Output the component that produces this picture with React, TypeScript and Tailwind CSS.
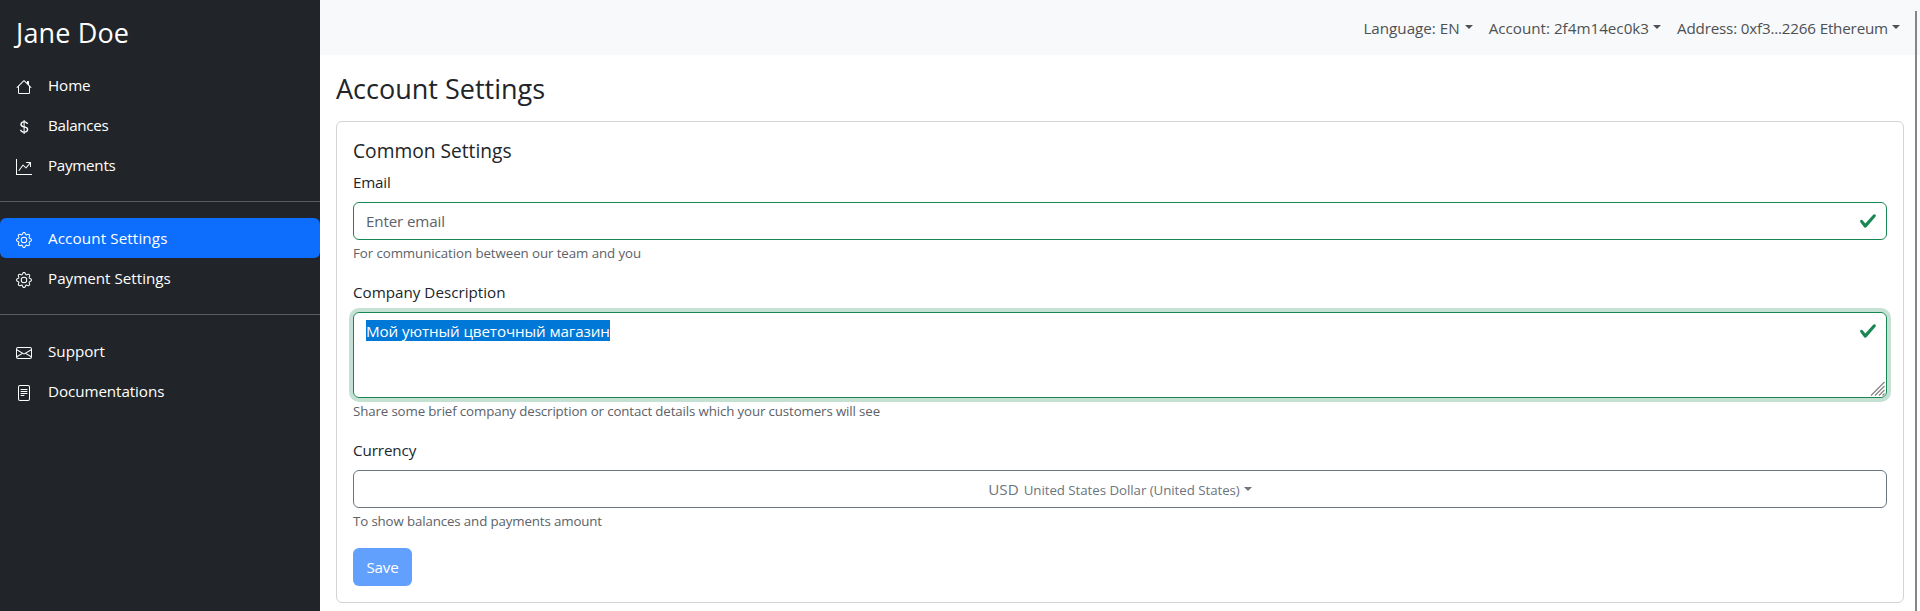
import type { ReactNode } from "react";
import type { IconType } from "react-icons";
import {
  BsHouse,
  BsCurrencyDollar,
  BsGraphUpArrow,
  BsGear,
  BsEnvelope,
  BsFileText,
} from "react-icons/bs";

function Caret({ className = "" }: { className?: string }) {
  return (
    <span
      className={`inline-block border-x-[4.8px] border-t-[4.8px] border-x-transparent border-t-current ${className}`}
    />
  );
}

function NavItem({
  icon: Icon,
  label,
  tracking = "",
  active = false,
}: {
  icon: IconType;
  label: string;
  tracking?: string;
  active?: boolean;
}) {
  return (
    <a
      className={`flex h-10 items-center gap-4 rounded-md px-4 text-white ${active ? "bg-[#0d6efd]" : ""}`}
    >
      <Icon className="mt-1 size-4 shrink-0" />
      <span className={`-mt-px ${tracking}`}>{label}</span>
    </a>
  );
}

function Divider() {
  return <hr className="my-4 border-t border-[#595c5f]" />;
}

function Check() {
  return (
    <svg viewBox="0 0 8 8" className="size-[18px] shrink-0" fill="#198754">
      <path d="M2.3 6.73.6 4.53c-.4-1.04.46-1.4 1.1-.8l1.1 1.4 3.4-3.8c.6-.63 1.6-.27 1.2.7l-4 4.6c-.43.5-.8.4-1.1.1z" />
    </svg>
  );
}

function Label({ children, className = "" }: { children: ReactNode; className?: string }) {
  return <label className={`mb-2 block text-[#212529] ${className}`}>{children}</label>;
}

function Help({ children, className = "" }: { children: ReactNode; className?: string }) {
  return (
    <p className={`mt-1 h-5 text-[13.3px] leading-[18px] text-[#5c6268] ${className}`}>{children}</p>
  );
}

export default function App() {
  return (
    <div className="relative flex h-[611px] overflow-hidden bg-white font-['Open_Sans','Noto_Sans',sans-serif] text-[15.2px] leading-6">
      <aside className="w-80 shrink-0 bg-[#212529] pt-4">
        <div className="mb-[7px] h-[42px] px-4 text-[27px] leading-[34px] tracking-[0.15px] text-white">Jane Doe</div>
        <nav>
          <NavItem icon={BsHouse} label="Home" tracking="tracking-[-0.1px]" />
          <NavItem icon={BsCurrencyDollar} label="Balances" tracking="tracking-[-0.3px]" />
          <NavItem icon={BsGraphUpArrow} label="Payments" tracking="tracking-[-0.28px]" />
          <Divider />
          <NavItem icon={BsGear} label="Account Settings" tracking="tracking-[0.12px]" active />
          <NavItem icon={BsGear} label="Payment Settings" />
          <Divider />
          <NavItem icon={BsEnvelope} label="Support" />
          <NavItem icon={BsFileText} label="Documentations" tracking="tracking-[-0.08px]" />
        </nav>
      </aside>

      <main className="flex-1">
        <header className="flex h-[55px] items-center justify-end gap-4 bg-[#f8f9fa] pr-5 text-[#4d5154]">
          <div className="flex items-center gap-[5px]">
            <span>Language: EN</span>
            <Caret className="-mt-0.5" />
          </div>
          <div className="flex items-center gap-1">
            <span>Account: 2f4m14ec0k3</span>
            <Caret className="-mt-0.5" />
          </div>
          <div className="flex items-center gap-1">
            <span className="tracking-[-0.18px]">Address: 0xf3...2266 Ethereum</span>
            <Caret className="-mt-0.5" />
          </div>
        </header>

        <div className="px-4 pt-4">
          <h1 className="mb-4 h-[34px] text-[27px] leading-[36px] text-[#212529]">Account Settings</h1>
          <section className="h-[482px] rounded-md border border-[#d3d3d4] p-4">
            <h2 className="mb-2 h-6 text-[19.2px] leading-[26px] text-[#212529]">Common Settings</h2>

            <div className="mb-4">
              <Label className="tracking-[-0.2px]">Email</Label>
              <div className="flex h-[38px] items-center justify-between rounded-md border border-[#198754] pr-[9px] pl-3">
                <span className="tracking-[-0.15px] text-[#5c6268]">Enter email</span>
                <Check />
              </div>
              <Help className="tracking-[-0.08px]">For communication between our team and you</Help>
            </div>

            <div className="mb-4">
              <Label>Company Description</Label>
              <div className="relative flex h-[86px] items-start justify-between rounded-md border border-[#198754] pt-[7px] pr-[9px] pl-3 shadow-[0_0_0_4px_rgba(25,135,84,0.25)]">
                <span className="h-[21px] bg-[#0078d7] leading-[22px] tracking-[-0.11px] text-white">
                  Мой уютный цветочный магазин
                </span>
                <div className="pt-0.5">
                  <Check />
                </div>
                <svg
                  viewBox="0 0 15 15"
                  className="absolute right-px bottom-px size-[15px]"
                  stroke="#858585"
                  strokeWidth="1.2"
                >
                  <path d="M1 14.5 14.5 1M5 14.5 14.5 5M9 14.5 14.5 9M12.5 14.5l2-2" />
                </svg>
              </div>
              <Help className="tracking-[-0.13px]">
                Share some brief company description or contact details which your customers will see
              </Help>
            </div>

            <div className="mb-4">
              <Label className="tracking-[-0.1px]">Currency</Label>
              <button className="flex h-[38px] w-full items-center justify-center rounded-md border border-[#6c757d] text-[#6c757d]">
                <span>USD</span>
                <span className="mt-px ml-[5px] text-[13.3px] tracking-[-0.05px]">
                  United States Dollar (United States)
                </span>
                <Caret className="ml-1" />
              </button>
              <Help className="tracking-[-0.13px]">To show balances and payments amount</Help>
            </div>

            <button className="flex h-[38px] w-[59px] items-center justify-center rounded-md bg-[#62a0fe] tracking-[-0.2px] text-white">
              Save
            </button>
          </section>
        </div>
      </main>
      <div className="absolute top-[11px] right-[3px] bottom-0 w-0.5 bg-[#858585]" />
    </div>
  );
}
